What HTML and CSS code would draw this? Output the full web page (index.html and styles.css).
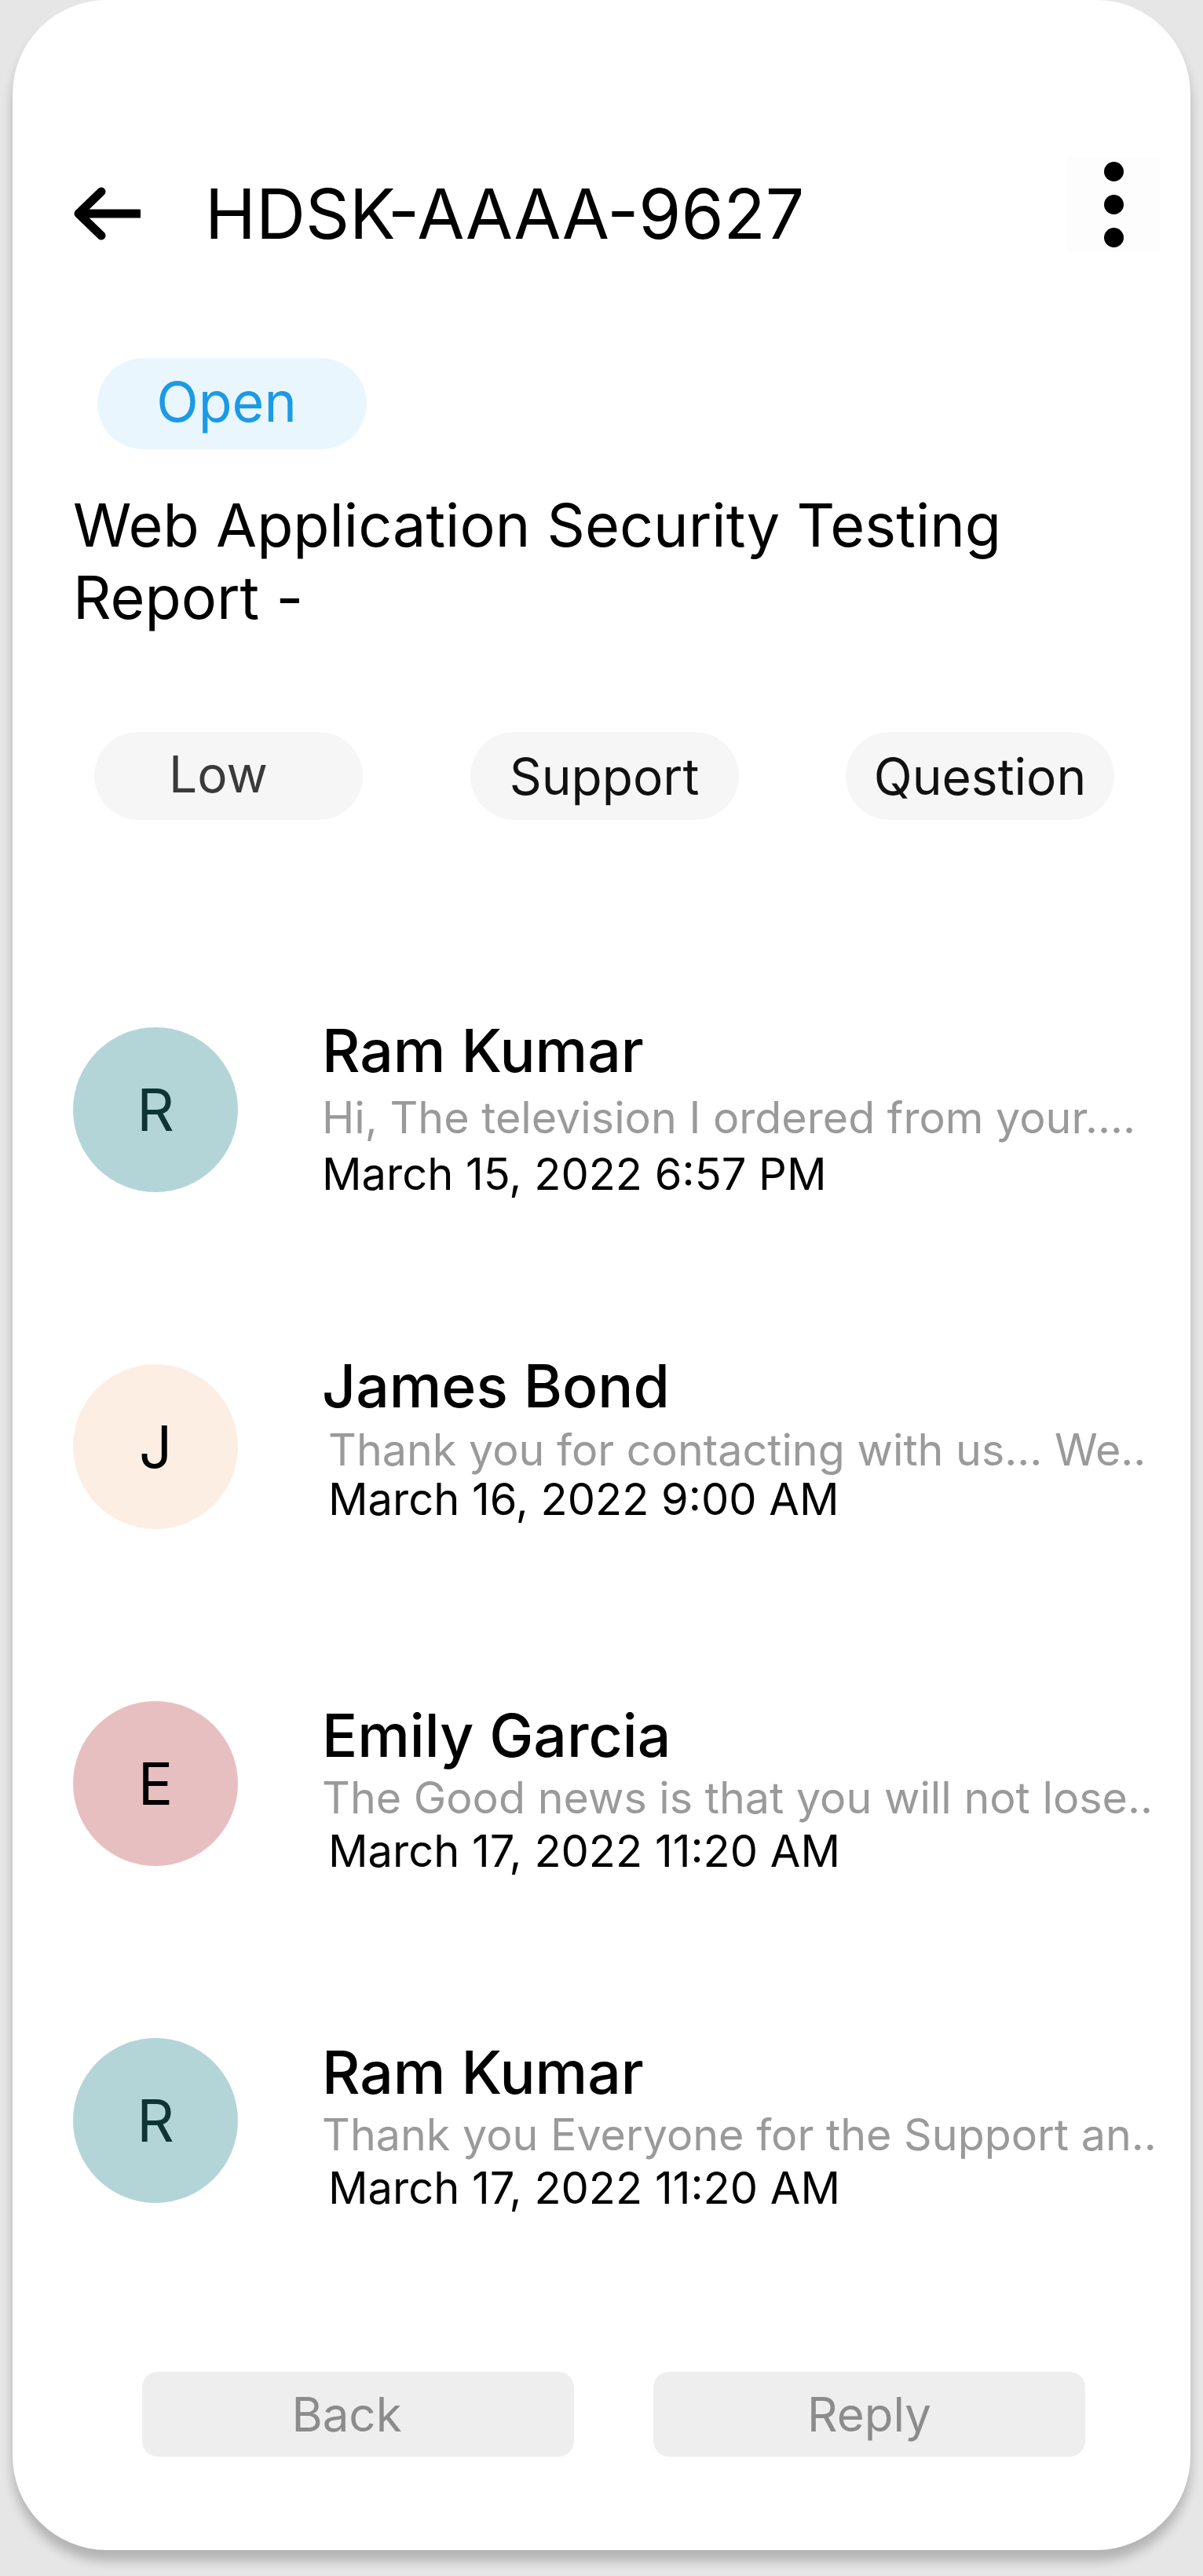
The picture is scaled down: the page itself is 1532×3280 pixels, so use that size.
FILE: index.html
```html
<!DOCTYPE html>
<html lang="en">
<head>
<meta charset="utf-8">
<title>HDSK-AAAA-9627</title>
<link rel="stylesheet" href="styles.css">
</head>
<body>
<div class="card">
  <header class="topbar">
    <div class="back">
      <svg width="88" height="68" viewBox="0 0 88 68"><path d="M86 34 H10 M38 6 L9 34 L38 62" fill="none" stroke="#000" stroke-width="11" stroke-linecap="round" stroke-linejoin="round"/></svg>
    </div>
    <h1 class="ticket-id">HDSK-AAAA-9627</h1>
    <div class="menu">
      <span class="dot"></span><span class="dot"></span><span class="dot"></span>
    </div>
  </header>

  <div class="status">Open</div>

  <h2 class="subject">Web Application Security Testing Report -</h2>

  <div class="tags">
    <div class="tag tag-low">Low</div>
    <div class="tag">Support</div>
    <div class="tag">Question</div>
  </div>

  <div class="thread">
    <div class="msg">
      <div class="avatar av-teal">R</div>
      <div class="msg-body body-a">
        <div class="name">Ram Kumar</div>
        <div class="preview">Hi, The television I ordered from your....</div>
        <div class="date">March 15, 2022 6:57 PM</div>
      </div>
    </div>
    <div class="msg">
      <div class="avatar av-peach">J</div>
      <div class="msg-body body-b">
        <div class="name">James Bond</div>
        <div class="preview indent">Thank you for contacting with us... We..</div>
        <div class="date indent">March 16, 2022 9:00 AM</div>
      </div>
    </div>
    <div class="msg">
      <div class="avatar av-pink">E</div>
      <div class="msg-body body-c">
        <div class="name">Emily Garcia</div>
        <div class="preview">The Good news is that you will not lose..</div>
        <div class="date indent">March 17, 2022 11:20 AM</div>
      </div>
    </div>
    <div class="msg">
      <div class="avatar av-teal">R</div>
      <div class="msg-body body-c">
        <div class="name">Ram Kumar</div>
        <div class="preview">Thank you Everyone for the Support an..</div>
        <div class="date indent">March 17, 2022 11:20 AM</div>
      </div>
    </div>
  </div>

  <div class="actions">
    <button class="btn btn-back">Back</button>
    <button class="btn">Reply</button>
  </div>
</div>
</body>
</html>
```
FILE: styles.css
```css
* { box-sizing: border-box; }
html, body {
  margin: 0;
  padding: 0;
  background: #e6e6e6;
}
body {
  font-family: Inter, "Noto Sans", "Liberation Sans", sans-serif;
  color: #000;
  height: 3280px;
  overflow: hidden;
}
.card {
  margin-left: 16px;
  width: 1500px;
  height: 3247px;
  background: #fff;
  border-radius: 120px;
  box-shadow: 0 14px 14px rgba(0, 0, 0, 0.22);
  padding: 200px 38px 0 77px;
  display: flex;
  flex-direction: column;
}
.topbar {
  display: flex;
  align-items: center;
}
.back {
  width: 88px;
  height: 68px;
  margin-left: -2px;
  display: flex;
}
.ticket-id {
  margin: 0 0 0 82px;
  font-size: 87.3px;
  font-weight: 400;
  line-height: 106px;
  letter-spacing: 0;
  flex: 1;
}
.menu {
  width: 120px;
  height: 120px;
  margin-bottom: 24px;
  background: #fdfdfd;
  display: flex;
  flex-direction: column;
  align-items: center;
  justify-content: center;
  gap: 17px;
}
.dot {
  width: 25px;
  height: 25px;
  border-radius: 50%;
  background: #000;
}
.status {
  margin: 112px 0 0 31px;
  width: 343px;
  height: 116px;
  border-radius: 58px;
  background: #eaf6fd;
  color: #1b9ae6;
  font-size: 70px;
  display: flex;
  align-items: center;
  justify-content: center;
  padding: 0 14px 6px 0;
}
.subject {
  margin: 51px 0 0 0;
  font-size: 75.5px;
  font-weight: 400;
  line-height: 92px;
  width: 1300px;
}
.tags {
  margin: 125px 0 0 27px;
  width: 1299px;
  display: flex;
  justify-content: space-between;
}
.tag {
  width: 342px;
  height: 112px;
  border-radius: 56px;
  background: #f6f6f6;
  font-size: 64px;
  color: #111;
  display: flex;
  align-items: center;
  justify-content: center;
}
.tag-low {
  color: #3a3a3a;
  padding: 0 26px 6px 0;
}
.thread {
  margin-top: 256px;
  display: flex;
  flex-direction: column;
  gap: 203px;
}
.msg {
  display: flex;
  align-items: center;
  height: 226px;
}
.avatar {
  width: 210px;
  height: 210px;
  border-radius: 50%;
  flex: none;
  display: flex;
  align-items: center;
  justify-content: center;
  font-size: 74px;
  color: #000;
}
.av-teal { background: #b4d5d8; color: #0e3434; }
.av-peach { background: #fdeee3; }
.av-pink { background: #e8bfc0; }
.msg-body {
  margin-left: 107px;
  display: flex;
  flex-direction: column;
  white-space: nowrap;
}
.name {
  font-size: 75px;
  font-weight: 500;
  line-height: 90px;
}
.preview {
  font-size: 55.6px;
  color: #9a9a9a;
}
.date {
  font-size: 56px;
  color: #000;
}
.body-a { padding-bottom: 6px; }
.body-a .preview { line-height: 80px; }
.body-a .date { line-height: 64px; }
.body-b { padding-bottom: 28px; }
.body-b .preview { line-height: 72px; }
.body-b .date { line-height: 54px; }
.body-c { padding-top: 14px; }
.body-c .preview { line-height: 68px; }
.body-c .date { line-height: 68px; }
.indent { padding-left: 8px; }
.actions {
  margin: 207px 0 0 88px;
  display: flex;
  gap: 101px;
}
.btn {
  width: 550px;
  height: 108px;
  border: none;
  border-radius: 20px;
  background: #eeeeee;
  color: #8c8c8c;
  font-family: Inter, "Noto Sans", "Liberation Sans", sans-serif;
  font-size: 60px;
  padding: 0;
}
.btn-back { padding: 0 29px 0 0; }
```
